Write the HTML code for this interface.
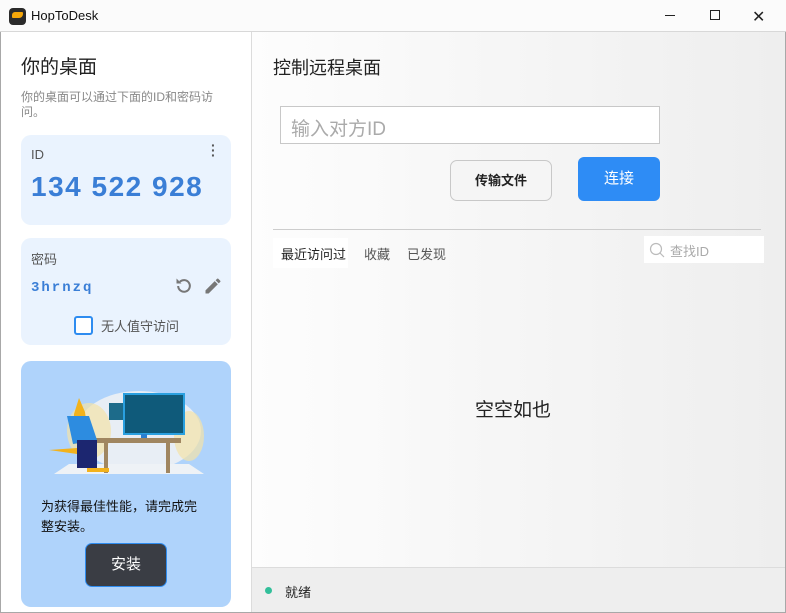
<!DOCTYPE html>
<html><head><meta charset="utf-8"><style>
*{margin:0;padding:0;box-sizing:border-box}
body{width:786px;height:613px;overflow:hidden;font-family:"Liberation Sans","Noto Sans CJK SC",sans-serif;background:#fff;position:relative}
.win{position:absolute;left:0;top:0;width:786px;height:613px;border:1px solid #a8a8a8}
.title{position:absolute;left:0;top:0;width:786px;height:32px;background:#fbfbfb;border-bottom:1px solid #d8d8d8}
.abs{position:absolute}
.left{position:absolute;left:1px;top:32px;width:251px;height:580px;background:#fff;border-right:1px solid #dcdcdc}
.right{position:absolute;left:252px;top:32px;width:533px;height:535px;background:linear-gradient(90deg,#fdfdfd,#eeeeee)}
.card{position:absolute;left:21px;width:210px;background:#eaf3fe;border-radius:10px}
</style></head><body>
<div class="win"></div>
<div class="title">
 <div class="abs" style="left:9px;top:8px;width:17px;height:17px;background:#2b2b2b;border-radius:4px"></div>
 <div class="abs" style="left:12px;top:12px;width:11px;height:6px;background:#f5a70a;border-radius:3px 1px 4px 1px"></div>
 <div class="abs" style="left:31px;top:8px;font-size:13px;color:#111">HopToDesk</div>
 <div class="abs" style="left:665px;top:15px;width:10px;height:1px;background:#222"></div>
 <div class="abs" style="left:710px;top:10px;width:10px;height:10px;border:1px solid #222"></div>
 <div class="abs" style="left:752px;top:7px;font-size:16px;color:#222">✕</div>
</div>
<div class="left">
 <div class="abs" style="left:20px;top:20px;font-size:19px;color:#222">你的桌面</div>
 <div class="abs" style="left:20px;top:58px;width:215px;font-size:12px;line-height:15px;color:#888">你的桌面可以通过下面的ID和密码访问。</div>
 <div class="card" style="left:20px;top:103px;height:90px">
  <div class="abs" style="left:10px;top:12px;font-size:13px;color:#555">ID</div>
  <div class="abs" style="left:190px;top:8px;font-size:14px;color:#555;font-weight:bold;line-height:5px">·<br>·<br>·</div>
  <div class="abs" style="left:10px;top:36px;font-size:28px;color:#3a7ed6;letter-spacing:1.5px;font-weight:bold">134 522 928</div>
 </div>
 <div class="card" style="left:20px;top:206px;height:107px">
  <div class="abs" style="left:10px;top:11px;font-size:13px;color:#555">密码</div>
  <div class="abs" style="left:10px;top:42px;font-size:14px;color:#3a7ed6;font-weight:bold;font-family:'Liberation Mono',monospace;letter-spacing:2px">3hrnzq</div>
  <svg class="abs" style="left:153px;top:38px" width="20" height="20" viewBox="0 0 24 24"><path d="M5 12a7 7 0 1 0 2-5" fill="none" stroke="#777" stroke-width="2.4"/><path d="M3 3v6h6z" fill="#777"/></svg>
  <svg class="abs" style="left:182px;top:38px" width="20" height="20" viewBox="0 0 24 24"><path d="M3 17.25V21h3.75L17.8 9.94l-3.75-3.75zM20.7 7.04a1 1 0 0 0 0-1.41l-2.34-2.34a1 1 0 0 0-1.41 0l-1.83 1.83 3.75 3.75z" fill="#777"/></svg>
  <div class="abs" style="left:53px;top:78px;width:19px;height:19px;border:2px solid #2e8cf0;border-radius:3px;background:#fff"></div>
  <div class="abs" style="left:80px;top:78px;font-size:13px;color:#555">无人值守访问</div>
 </div>
 <div class="card" style="left:20px;top:329px;height:246px;background:#afd3fb">
  <svg class="abs" style="left:28px;top:15px" width="160" height="100" viewBox="0 0 160 100">
   <ellipse cx="90" cy="55" rx="62" ry="40" fill="#e8eef5"/>
   <ellipse cx="40" cy="55" rx="22" ry="28" fill="#f3e2a8" opacity=".7"/>
   <ellipse cx="140" cy="60" rx="15" ry="25" fill="#f3e2a8" opacity=".7"/>
   <polygon points="5,98 155,98 140,88 20,88" fill="#eef2f6"/>
   <rect x="60" y="27" width="25" height="17" fill="#1d6b8a"/>
   <rect x="75" y="18" width="60" height="40" fill="#0f5a7a" stroke="#2aa0e0" stroke-width="2"/>
   <rect x="92" y="58" width="6" height="6" fill="#2a7fd0"/>
   <rect x="42" y="62" width="90" height="5" fill="#a08660"/>
   <rect x="55" y="67" width="4" height="30" fill="#a08660"/>
   <rect x="117" y="67" width="4" height="30" fill="#a08660"/>
   <path d="M25 38l5-16 6 14 4 30-16 2z" fill="#f2b21c"/>
   <path d="M18 40l22 0 8 24-24 4z" fill="#2d8ce0"/>
   <rect x="28" y="64" width="20" height="28" fill="#1c2670"/>
   <path d="M0 74l28-2 0 6z" fill="#f2b21c"/>
   <rect x="38" y="92" width="22" height="4" fill="#f2b21c"/>
  </svg>
  <div class="abs" style="left:20px;top:136px;width:165px;font-size:13px;line-height:20px;color:#111">为获得最佳性能，请完成完整安装。</div>
  <div class="abs" style="left:64px;top:182px;width:82px;height:44px;background:#3a3d44;border:1px solid #2e8cf0;border-radius:7px;color:#fff;font-size:15px;text-align:center;line-height:42px">安装</div>
 </div>
</div>
<div class="right">
 <div class="abs" style="left:21px;top:22px;font-size:18px;color:#222">控制远程桌面</div>
 <div class="abs" style="left:28px;top:74px;width:380px;height:38px;background:#fff;border:1px solid #c8c8c8;font-size:19px;color:#aaa;padding:7px 10px">输入对方ID</div>
 <div class="abs" style="left:198px;top:128px;width:102px;height:41px;border:1px solid #c8c8c8;border-radius:7px;background:#f5f5f5;font-size:13px;font-weight:bold;color:#222;text-align:center;line-height:39px">传输文件</div>
 <div class="abs" style="left:326px;top:125px;width:82px;height:44px;background:#2e8cf5;border-radius:6px;color:#fff;font-size:15px;text-align:center;line-height:44px">连接</div>
 <div class="abs" style="left:21px;top:197px;width:488px;height:1px;background:#cdcdcd"></div>
 <div class="abs" style="left:21px;top:206px;width:75px;height:30px;background:#fff"></div>
 <div class="abs" style="left:29px;top:212px;font-size:13px;color:#222">最近访问过</div>
 <div class="abs" style="left:112px;top:212px;font-size:13px;color:#555">收藏</div>
 <div class="abs" style="left:155px;top:212px;font-size:13px;color:#555">已发现</div>
 <div class="abs" style="left:392px;top:204px;width:120px;height:27px;background:#fff"></div>
 <svg class="abs" style="left:397px;top:210px" width="16" height="16" viewBox="0 0 16 16"><circle cx="7" cy="7" r="5.5" fill="none" stroke="#bbb" stroke-width="1.2"/><path d="M11 11l4 4" stroke="#bbb" stroke-width="1.2"/></svg>
 <div class="abs" style="left:418px;top:209px;font-size:13px;color:#aaa">查找ID</div>
 <div class="abs" style="left:223px;top:363px;font-size:19px;color:#222">空空如也</div>
</div>
<div class="abs" style="left:252px;top:567px;width:533px;height:45px;background:#eeeeee;border-top:1px solid #dcdcdc">
 <div class="abs" style="left:13px;top:19px;width:7px;height:7px;border-radius:50%;background:#32bf9a"></div>
 <div class="abs" style="left:33px;top:14px;font-size:13px;color:#222">就绪</div>
</div>
</body></html>
